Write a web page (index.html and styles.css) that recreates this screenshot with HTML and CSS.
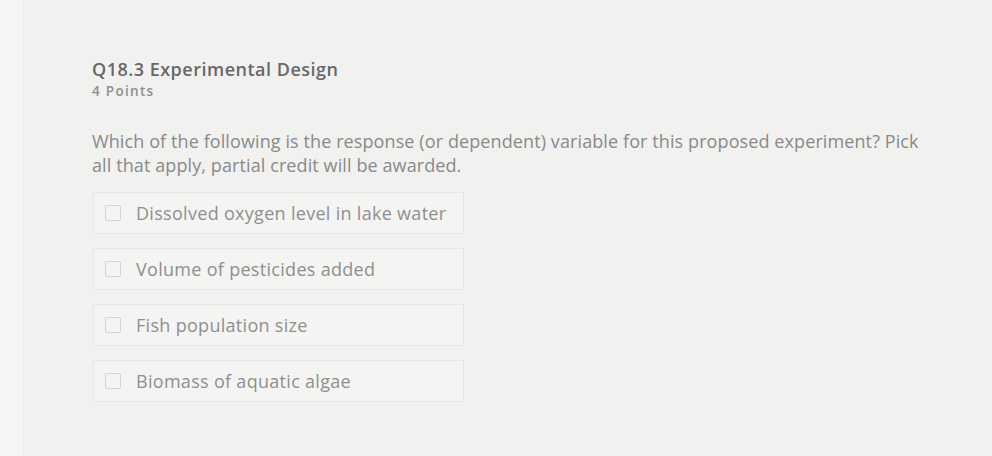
FILE: index.html
```html
<!DOCTYPE html>
<html>
<head>
<meta charset="utf-8">
<link rel="stylesheet" href="styles.css">
</head>
<body>
<div class="page">
  <div class="rail"></div>
  <main class="main">
    <div class="question">
      <h2 class="q-title">Q18.3 Experimental Design</h2>
      <div class="q-points">4 Points</div>
      <p class="q-text">Which of the following is the response (or dependent) variable for this proposed experiment? Pick all that apply, partial credit will be awarded.</p>
      <ul class="options">
        <li class="option"><span class="box"></span><span class="label">Dissolved oxygen level in lake water</span></li>
        <li class="option"><span class="box"></span><span class="label">Volume of pesticides added</span></li>
        <li class="option"><span class="box"></span><span class="label">Fish population size</span></li>
        <li class="option"><span class="box"></span><span class="label">Biomass of aquatic algae</span></li>
      </ul>
    </div>
  </main>
</div>
</body>
</html>
```
FILE: styles.css
```css
html, body {
  margin: 0;
  padding: 0;
  height: 100%;
}
body {
  background: #f1f1f0;
  font-family: "Open Sans", "Noto Sans", sans-serif;
  overflow: hidden;
}
.page {
  display: flex;
  height: 100%;
}
.rail {
  width: 23px;
  flex: none;
  background: #f5f5f7;
  border-right: 1px solid #ebebeb;
}
.main {
  flex: 1;
  padding: 57px 0 0 68px;
}
.question {
  width: 842px;
}
.q-title {
  margin: 0;
  font-size: 18px;
  font-weight: 600;
  color: #686868;
  line-height: 25px;
  letter-spacing: 0.5px;
}
.q-points {
  margin-top: 1px;
  font-size: 13.5px;
  font-weight: 600;
  color: #8e8e8e;
  line-height: 17px;
  letter-spacing: 1.3px;
}
.q-text {
  margin: 29px 0 0 0;
  font-size: 18px;
  line-height: 24px;
  color: #8a8a8a;
  letter-spacing: 0.1px;
}
.options {
  list-style: none;
  margin: 15px 0 0 1px;
  padding: 0;
  display: flex;
  flex-direction: column;
  gap: 14px;
}
.option {
  width: 371px;
  height: 42px;
  box-sizing: border-box;
  border: 1px solid #e6e6e5;
  background: #f4f4f3;
  display: flex;
  align-items: center;
  padding-left: 11px;
  gap: 15px;
}
.box {
  width: 16px;
  height: 16px;
  border: 1.5px solid #d4d4d4;
  border-radius: 1px;
  box-sizing: border-box;
  flex: none;
}
.label {
  font-size: 18px;
  color: #8f8f8f;
  letter-spacing: 0.3px;
}
```
